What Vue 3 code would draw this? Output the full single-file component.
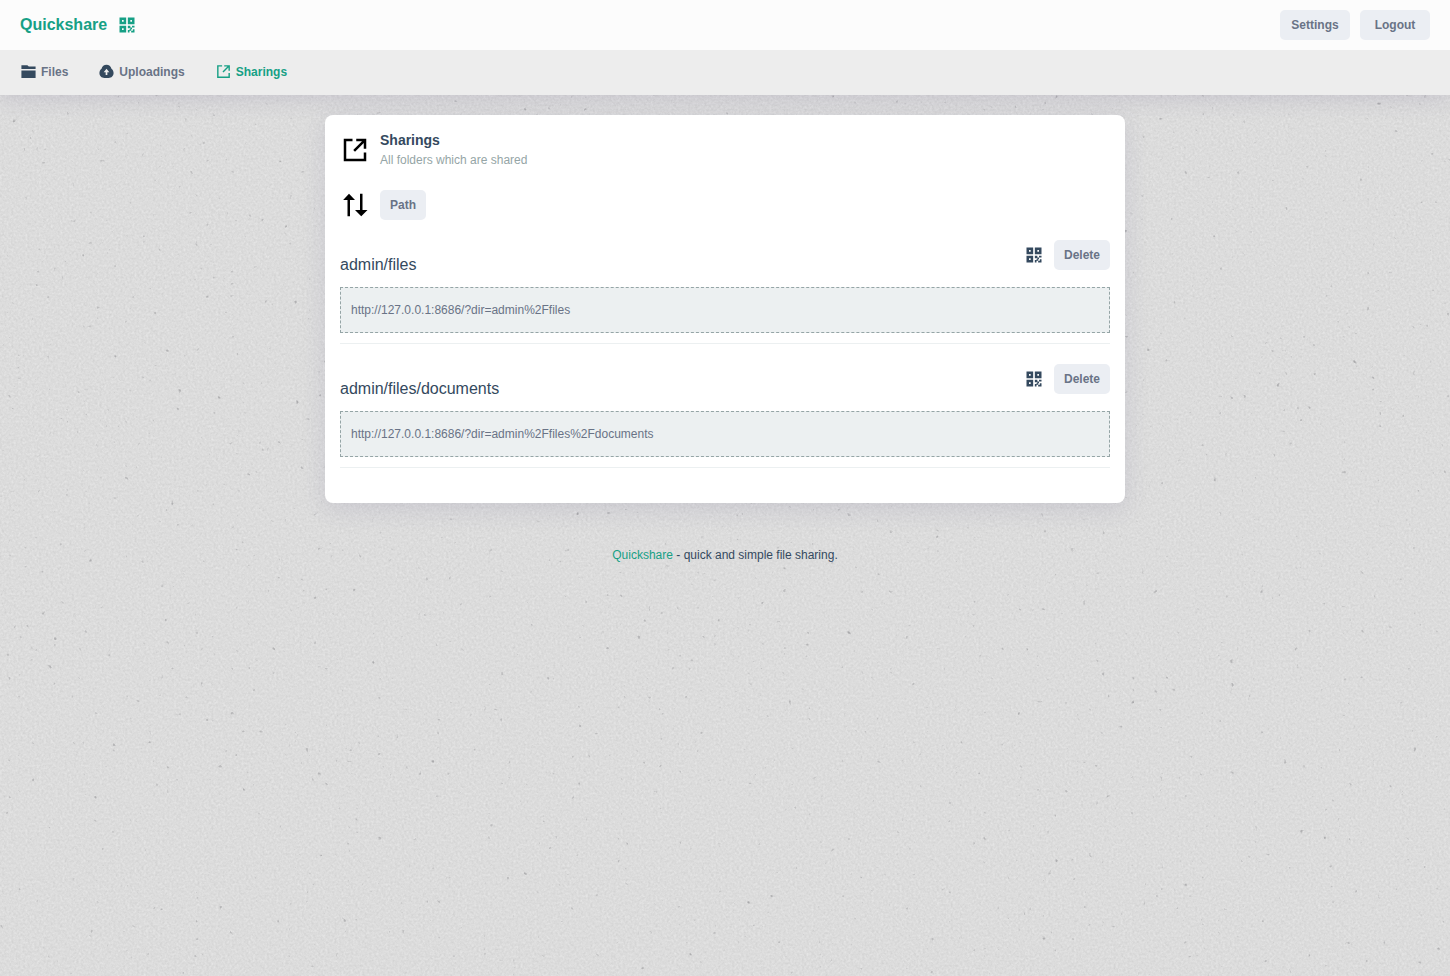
<script setup>
import { h } from 'vue'

const paths = {
  qr: 'M16 17v-1h-3v-3h3v2h2v2h-1v2h-2v2h-2v-3h2v-1h1zm5 4h-4v-2h2v-2h2v4zM3 3h8v8H3V3zm10 0h8v8h-8V3zM3 13h8v8H3v-8zm15 0h3v2h-3v-2zM6 6v2h2V6H6zm0 10v2h2v-2H6zM16 6v2h2V6h-2z',
  folder: 'M22 10.5V21H2V10.5h20zm0-2H2V3h8.4l2 2H22v3.500z',
  upload: 'M12 2.500c3.600 0 6 2.200 7 5.500 1.800 1.300 3 3.500 3 6 0 4-3 7-7 7H9c-4 0-7-3-7-7 0-2.500 1.200-4.700 3-6 1-3.300 3.400-5.500 7-5.500zM13.200 13H16l-4-5-4 5h2.800v4h2.400v-4z',
  share: 'M10 3v2H5v14h14v-5h2v7H3V3h7zm7.586 2H13V3h8v8h-2V6.414l-7 7L10.586 12l7-7z',
  sort: 'M6 21V8H2.500L7.200 3 12 8H8v13H6zM16 3h2v13h4l-5 5-5-5h4V3z',
}

const Icon = (props) =>
  h('svg', { viewBox: '0 0 24 24', fill: 'currentColor', 'fill-rule': 'evenodd', 'aria-hidden': 'true' }, [
    h('path', { d: paths[props.name] }),
  ])
Icon.props = ['name']

const tabs = [
  { label: 'Files', icon: 'folder' },
  { label: 'Uploadings', icon: 'upload' },
  { label: 'Sharings', icon: 'share', active: true },
]

const sharings = [
  { path: 'admin/files', url: 'http://127.0.0.1:8686/?dir=admin%2Ffiles' },
  { path: 'admin/files/documents', url: 'http://127.0.0.1:8686/?dir=admin%2Ffiles%2Fdocuments' },
]
</script>

<template>
  <div class="page">
    <svg class="paper" aria-hidden="true">
      <filter id="grain" x="0" y="0" width="100%" height="100%" color-interpolation-filters="sRGB">
        <feTurbulence type="fractalNoise" baseFrequency="0.43" numOctaves="3" seed="8" />
        <feColorMatrix values="0.07 0.06 0 0 0.797  0.07 0.06 0 0 0.797  0.07 0.06 0 0 0.797  0 0 0 0 1" />
      </filter>
      <filter id="specks" x="0" y="0" width="100%" height="100%" color-interpolation-filters="sRGB">
        <feTurbulence type="fractalNoise" baseFrequency="0.17" numOctaves="2" seed="31" />
        <feColorMatrix values="0 0 0 0 0.6  0 0 0 0 0.6  0 0 0 0 0.61  5 0 0 0 -3.8" />
      </filter>
      <rect width="100%" height="100%" filter="url(#grain)" />
      <rect width="100%" height="100%" filter="url(#specks)" />
    </svg>

    <div class="top">
      <header class="bar">
        <a class="brand" href="#">Quickshare</a>
        <button class="icon-btn green" type="button" aria-label="Show QR code"><Icon name="qr" class="i20" /></button>
        <div class="actions">
          <button class="btn wide" type="button">Settings</button>
          <button class="btn wide" type="button">Logout</button>
        </div>
      </header>
      <nav class="tabs">
        <button v-for="t in tabs" :key="t.label" type="button" class="tab" :class="{ active: t.active }">
          <Icon :name="t.icon" class="i17" /><span>{{ t.label }}</span>
        </button>
      </nav>
    </div>

    <main class="card">
      <div class="head">
        <Icon name="share" class="i30" />
        <div>
          <h1>Sharings</h1>
          <p class="desc">All folders which are shared</p>
        </div>
      </div>
      <div class="order">
        <Icon name="sort" class="i30" />
        <button class="btn" type="button">Path</button>
      </div>
      <ul class="list">
        <li v-for="s in sharings" :key="s.path" class="item">
          <div class="row">
            <h2>{{ s.path }}</h2>
            <button class="icon-btn" type="button" aria-label="Show QR code"><Icon name="qr" class="i20" /></button>
            <button class="btn" type="button">Delete</button>
          </div>
          <div class="url">{{ s.url }}</div>
        </li>
      </ul>
    </main>

    <footer class="foot"><a href="#">Quickshare</a> - quick and simple file sharing.</footer>
  </div>
</template>

<style>
body {
  margin: 0;
  background: #dcdcdc;
}
</style>

<style scoped>
.page {
  position: relative;
  isolation: isolate;
  min-height: 100vh;
  font: 12px/20px 'Liberation Sans', Arial, sans-serif;
  color: #34495e;
}
.paper {
  position: absolute;
  inset: 0;
  z-index: -1;
  width: 100%;
  height: 100%;
}
svg {
  display: block;
  flex: none;
}
.i17 {
  width: 17px;
  height: 17px;
}
.i20 {
  width: 20px;
  height: 20px;
}
.i30 {
  width: 30px;
  height: 30px;
  color: #000;
}
button {
  font: inherit;
  border: 0;
  margin: 0;
  padding: 0;
  background: none;
  color: inherit;
  cursor: pointer;
}
a {
  color: #16a085;
  text-decoration: none;
}
.top {
  box-shadow: 0 4px 20px rgba(80, 70, 120, 0.15);
}
.bar {
  display: flex;
  align-items: center;
  height: 50px;
  padding: 0 20px;
  background: #fcfcfc;
}
.brand {
  font-size: 16px;
  font-weight: bold;
  margin-right: 10px;
}
.green {
  color: #16a085;
}
.actions {
  display: flex;
  gap: 10px;
  margin-left: auto;
}
.btn {
  height: 30px;
  padding: 0 10px;
  border-radius: 5px;
  background: #ebeef3;
  color: #697386;
  font-weight: bold;
}
.wide {
  width: 70px;
}
.tabs {
  box-sizing: border-box;
  display: flex;
  gap: 30px;
  height: 45px;
  padding: 0 20px 2px;
  background: #ededed;
}
.tab {
  display: flex;
  align-items: center;
  gap: 4px;
  color: #697386;
  font-weight: bold;
}
.tab svg {
  color: #34495e;
}
.tab.active,
.tab.active svg {
  color: #16a085;
}
.card {
  box-sizing: border-box;
  max-width: 800px;
  margin: 20px auto 0;
  padding: 15px 15px 35px;
  border-radius: 8px;
  background: #fff;
  box-shadow: 0 6px 24px rgba(80, 70, 120, 0.13);
}
.head,
.order {
  display: flex;
  align-items: center;
  gap: 10px;
  margin-bottom: 20px;
}
h1,
h2,
p,
ul {
  margin: 0;
  padding: 0;
}
h1 {
  font-size: 14px;
  line-height: 20px;
}
.desc {
  color: #95a5a6;
}
.list {
  list-style: none;
}
.item {
  padding-bottom: 10px;
  border-bottom: 1px solid #ecf0f1;
}
.item + .item {
  margin-top: 20px;
}
.row {
  display: flex;
  align-items: center;
  gap: 10px;
  margin-bottom: 17px;
}
.row h2 {
  flex: 1;
  align-self: flex-end;
  font-size: 16px;
  line-height: 10px;
  font-weight: normal;
}
.url {
  padding: 12px 10px;
  border: 1px dashed #95a5a6;
  background: #ecf0f1;
  color: #697386;
  overflow-wrap: anywhere;
}
.foot {
  padding: 42px 0 20px;
  text-align: center;
}
</style>
